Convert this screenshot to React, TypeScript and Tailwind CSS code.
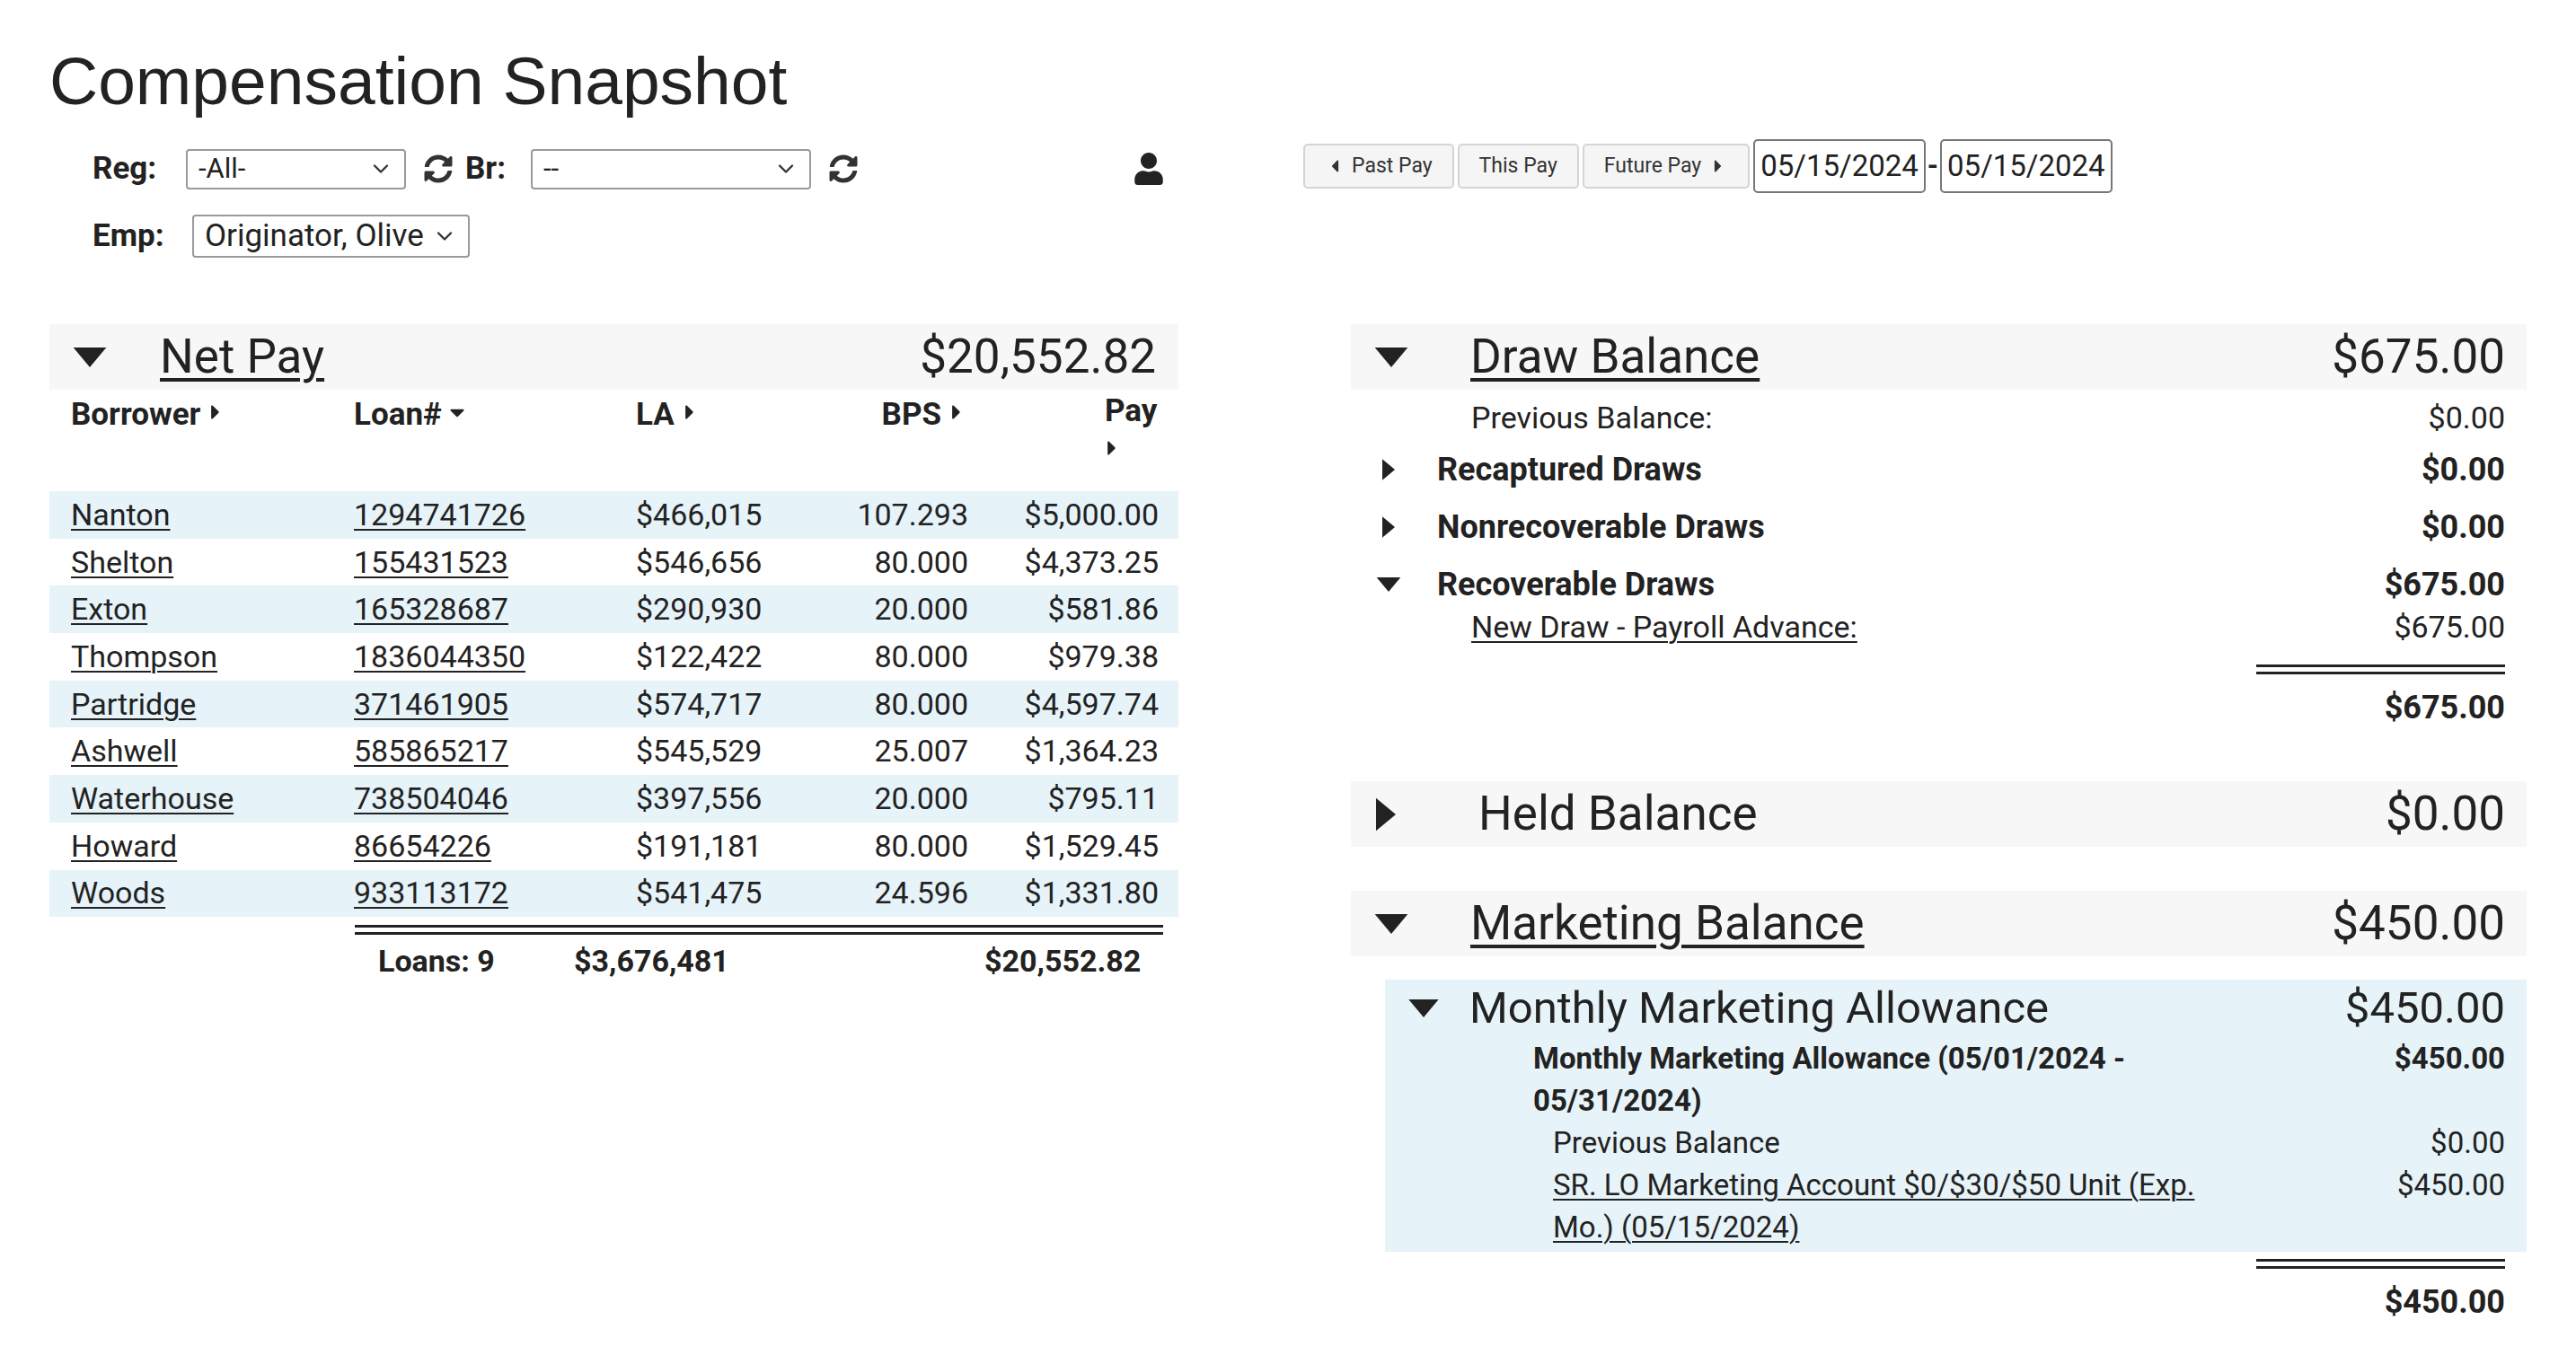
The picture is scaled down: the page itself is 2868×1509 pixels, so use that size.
import React from "react";
import { FaSyncAlt, FaUser, FaCaretRight, FaCaretDown, FaCaretLeft } from "react-icons/fa";
import { ChevronDown } from "lucide-react";

const rows = [
  ["Nanton", "1294741726", "$466,015", "107.293", "$5,000.00"],
  ["Shelton", "155431523", "$546,656", "80.000", "$4,373.25"],
  ["Exton", "165328687", "$290,930", "20.000", "$581.86"],
  ["Thompson", "1836044350", "$122,422", "80.000", "$979.38"],
  ["Partridge", "371461905", "$574,717", "80.000", "$4,597.74"],
  ["Ashwell", "585865217", "$545,529", "25.007", "$1,364.23"],
  ["Waterhouse", "738504046", "$397,556", "20.000", "$795.11"],
  ["Howard", "86654226", "$191,181", "80.000", "$1,529.45"],
  ["Woods", "933113172", "$541,475", "24.596", "$1,331.80"],
];

const Down = ({ c = "" }: { c?: string }) => (
  <svg viewBox="0 0 40 24" className={c}><polygon points="0,0 40,0 20,24" fill="#222" /></svg>
);
const Right = ({ c = "" }: { c?: string }) => (
  <svg viewBox="0 0 24 40" className={c}><polygon points="0,0 24,20 0,40" fill="#222" /></svg>
);

function Sel({ w, text, h = "h-[45px]", t = "text-[31px]" }: { w: string; text: string; h?: string; t?: string }) {
  return (
    <div className={`${w} ${h} ${t} border-2 border-[#9a9a9a] rounded-[4px] bg-white flex items-center justify-between px-3 text-[#222]`}>
      <span>{text}</span>
      <ChevronDown size={28} strokeWidth={2} className="text-[#333]" />
    </div>
  );
}

function Double({ w }: { w: string }) {
  return (
    <div className={`${w} flex flex-col gap-[5px]`}>
      <div className="h-[3px] bg-[#222]" />
      <div className="h-[3px] bg-[#222]" />
    </div>
  );
}

export default function App() {
  return (
    <div className="w-[2868px] h-[1509px] bg-white text-[#222] relative" style={{ fontFamily: "Roboto, 'Liberation Sans', sans-serif" }}>
      <div className="absolute left-[55px] top-[34px] text-[75px] text-[#222]" style={{ fontFamily: "'Liberation Sans', Arial, sans-serif" }}>
        Compensation Snapshot
      </div>

      <div className="pt-[160px] pl-[55px] flex">
        <div className="w-[1396px] flex flex-col">
          <div className="flex items-center h-[56px]">
            <span className="ml-[48px] w-[104px] font-bold text-[35px]">Reg:</span>
            <Sel w="w-[245px]" text="-All-" />
            <FaSyncAlt className="ml-[20px] text-[32px] text-[#333]" />
            <span className="ml-[14px] w-[73px] font-bold text-[35px]">Br:</span>
            <Sel w="w-[312px]" text="--" />
            <FaSyncAlt className="ml-[20px] text-[32px] text-[#333]" />
            <FaUser className="ml-[306px] text-[36px] text-[#222]" />
          </div>
          <div className="flex items-center mt-[22px] h-[50px]">
            <span className="ml-[48px] w-[111px] font-bold text-[35px]">Emp:</span>
            <Sel w="w-[309px]" h="h-[48px]" t="text-[35px]" text="Originator, Olive" />
          </div>
        </div>
        <div className="flex items-start gap-[4px]">
          {[
            ["Past Pay", "l"],
            ["This Pay", ""],
            ["Future Pay", "r"],
          ].map(([t, a]) => (
            <div key={t} className="h-[50px] px-[22px] flex items-center gap-[8px] border-2 border-[#d4d4d4] rounded-[5px] bg-[#f5f5f5] text-[23px] text-[#333]">
              {a === "l" && <FaCaretLeft className="text-[22px]" />}
              {t}
              {a === "r" && <FaCaretRight className="text-[22px]" />}
            </div>
          ))}
          <div className="flex items-center -mt-[5px]">
            <div className="h-[60px] px-[6px] flex items-center border-2 border-[#777] rounded-[5px] text-[33px] text-[#222]">05/15/2024</div>
            <span className="mx-[2px] text-[31px] font-bold">-</span>
            <div className="h-[60px] px-[6px] flex items-center border-2 border-[#777] rounded-[5px] text-[33px] text-[#222]">05/15/2024</div>
          </div>
        </div>
      </div>

      <div className="flex pl-[55px] mt-[73px]">
        {/* Net pay */}
        <div className="w-[1257px]">
          <div className="h-[73px] bg-[#f7f7f7] flex items-center pl-[25px] pr-[25px]">
            <Down c="w-[40px] h-[22px]" />
            <span className="ml-[58px] text-[53px] underline decoration-[4px] underline-offset-[6px]">Net Pay</span>
            <span className="ml-auto text-[53px]">$20,552.82</span>
          </div>
          <div className="grid grid-cols-[339px_314px_192px_178px_212px] h-[113px] pt-[2px] font-bold text-[35px]">
            <div className="pl-[24px] flex items-start gap-[4px]">Borrower<FaCaretRight className="mt-[10px] text-[26px]" /></div>
            <div className="flex items-start gap-[4px]">Loan#<FaCaretDown className="mt-[10px] text-[26px]" /></div>
            <div className="flex items-start gap-[4px]">LA<FaCaretRight className="mt-[10px] text-[26px]" /></div>
            <div className="flex items-start justify-end gap-[4px]">BPS<FaCaretRight className="mt-[10px] text-[26px]" /></div>
            <div className="flex justify-end">
              <div className="w-[60px] flex flex-col leading-[44px]"><span>Pay</span><FaCaretRight className="mt-[6px] -ml-[5px] text-[26px]" /></div>
            </div>
          </div>
          {rows.map((r, i) => (
            <div key={r[0]} className={`grid grid-cols-[339px_314px_192px_178px_212px] h-[52.7px] items-center text-[34px] ${i % 2 === 0 ? "bg-[#e6f3f9]" : ""}`}>
              <div className="pl-[24px] underline decoration-[2px] underline-offset-[4px]">{r[0]}</div>
              <div className="underline decoration-[2px] underline-offset-[4px]">{r[1]}</div>
              <div>{r[2]}</div>
              <div className="text-right">{r[3]}</div>
              <div className="text-right">{r[4]}</div>
            </div>
          ))}
          <div className="ml-[340px] mt-[9px]"><Double w="w-[900px]" /></div>
          <div className="flex font-bold text-[34px] mt-[4px]">
            <span className="ml-[366px] w-[218px]">Loans: 9</span>
            <span className="w-[457px]">$3,676,481</span>
            <span>$20,552.82</span>
          </div>
        </div>

        {/* Right */}
        <div className="ml-[192px] w-[1309px]">
          <div className="h-[73px] bg-[#f7f7f7] flex items-center pl-[25px] pr-[24px]">
            <Down c="w-[40px] h-[22px]" />
            <span className="ml-[68px] text-[53px] underline decoration-[4px] underline-offset-[6px]">Draw Balance</span>
            <span className="ml-auto text-[53px]">$675.00</span>
          </div>
          <div className="flex justify-between pl-[134px] pr-[24px] mt-[6px] text-[34px]">
            <span>Previous Balance:</span><span>$0.00</span>
          </div>
          {[
            ["Recaptured Draws", "$0.00", false],
            ["Nonrecoverable Draws", "$0.00", false],
            ["Recoverable Draws", "$675.00", true],
          ].map(([t, v, open]) => (
            <div key={t as string} className="flex items-center h-[64px] pl-[28px] pr-[24px] font-bold text-[36px]">
              {open ? <Down c="w-[28px] h-[16px]" /> : <Right c="w-[14px] h-[28px] mx-[7px]" />}
              <span className="ml-[40px]">{t as string}</span>
              <span className="ml-auto">{v as string}</span>
            </div>
          ))}
          <div className="flex justify-between pl-[134px] pr-[24px] -mt-[10px] text-[34px]">
            <span className="underline decoration-[2px] underline-offset-[4px]">New Draw - Payroll Advance:</span><span>$675.00</span>
          </div>
          <div className="flex justify-end pr-[24px] mt-[16px]"><Double w="w-[277px]" /></div>
          <div className="flex justify-end pr-[24px] mt-[10px] font-bold text-[36px]">$675.00</div>

          <div className="h-[73px] bg-[#f7f7f7] flex items-center pl-[28px] pr-[24px] mt-[55px]">
            <Right c="w-[22px] h-[38px]" />
            <span className="ml-[92px] text-[53px]">Held Balance</span>
            <span className="ml-auto text-[53px]">$0.00</span>
          </div>

          <div className="h-[73px] bg-[#f7f7f7] flex items-center pl-[25px] pr-[24px] mt-[49px]">
            <Down c="w-[40px] h-[22px]" />
            <span className="ml-[68px] text-[53px] underline decoration-[4px] underline-offset-[6px]">Marketing Balance</span>
            <span className="ml-auto text-[53px]">$450.00</span>
          </div>

          <div className="ml-[38px] mt-[26px] bg-[#e6f3f9] pb-[4px]">
            <div className="flex items-center h-[64px] pl-[25px] pr-[24px] text-[49px]">
              <Down c="w-[36px] h-[20px]" />
              <span className="ml-[33px]">Monthly Marketing Allowance</span>
              <span className="ml-auto">$450.00</span>
            </div>
            <div className="flex justify-between pl-[165px] pr-[24px] font-bold text-[33px] leading-[47px]">
              <span className="w-[760px]">Monthly Marketing Allowance (05/01/2024 - 05/31/2024)</span><span>$450.00</span>
            </div>
            <div className="flex justify-between pl-[187px] pr-[24px] text-[33px] leading-[47px]">
              <span>Previous Balance</span><span>$0.00</span>
            </div>
            <div className="flex justify-between pl-[187px] pr-[24px] text-[33px] leading-[47px]">
              <span className="w-[760px] underline decoration-[2px] underline-offset-[4px]">SR. LO Marketing Account $0/$30/$50 Unit (Exp. Mo.) (05/15/2024)</span><span>$450.00</span>
            </div>
          </div>
          <div className="flex justify-end pr-[24px] mt-[8px]"><Double w="w-[277px]" /></div>
          <div className="flex justify-end pr-[24px] mt-[10px] font-bold text-[36px]">$450.00</div>
        </div>
      </div>
    </div>
  );
}
